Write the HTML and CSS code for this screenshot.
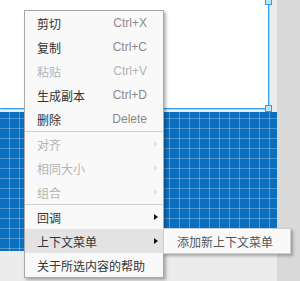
FILE: index.html
```html
<!DOCTYPE html>
<html lang="zh">
<head>
    <meta charset="UTF-8">
    <title>上下文菜单</title>
    <link rel="stylesheet" href="styles.css">
</head>
<body>
    <div class="stage">
        <div class="panel">
            <span class="handle handle-top"></span>
            <span class="handle handle-bottom"></span>
        </div>
        <div class="grid"></div>
    </div>
    <div class="side"></div>

    <ul class="menu">
        <li class="item"><span>剪切</span><span class="key">Ctrl+X</span></li>
        <li class="item"><span>复制</span><span class="key">Ctrl+C</span></li>
        <li class="item disabled"><span>粘贴</span><span class="key">Ctrl+V</span></li>
        <li class="item"><span>生成副本</span><span class="key">Ctrl+D</span></li>
        <li class="item"><span>删除</span><span class="key">Delete</span></li>
        <li class="sep"></li>
        <li class="item disabled sub"><span>对齐</span></li>
        <li class="item disabled sub"><span>相同大小</span></li>
        <li class="item disabled sub"><span>组合</span></li>
        <li class="sep"></li>
        <li class="item sub"><span>回调</span></li>
        <li class="item sub active"><span>上下文菜单</span></li>
        <li class="item"><span>关于所选内容的帮助</span></li>
    </ul>

    <ul class="submenu">
        <li class="item"><span>添加新上下文菜单</span></li>
    </ul>
</body>
</html>
```

FILE: styles.css
```css
body {
    margin: 0;
    width: 300px;
    height: 281px;
    overflow: hidden;
    display: flex;
    font-family: "Liberation Sans", "Noto Sans CJK SC", sans-serif;
    font-size: 12px;
}
.stage {
    width: 277px;
    background-color: #ececec;
    display: flex;
    flex-direction: column;
    gap: 3px;
}
.side {
    flex: 1;
    background-color: #dadada;
}
.panel {
    position: relative;
    width: 268px;
    height: 108px;
    background-color: #fff;
    border-right: 1px solid #2e9cf0;
    border-bottom: 1px solid #2e9cf0;
    box-shadow: 1px 1px 0 #a9dafc;
}
.handle {
    position: absolute;
    right: -4px;
    width: 5px;
    height: 5px;
    background-color: #bfe6ff;
    border: 1px solid #2e9cf0;
}
.handle-top {
    top: -2px;
}
.handle-bottom {
    bottom: -4px;
}
.grid {
    height: 139px;
    background-color: #0b6fc0;
    background-image:
        linear-gradient(to right, rgba(255, 255, 255, 0.28) 1px, transparent 1px),
        linear-gradient(to bottom, rgba(255, 255, 255, 0.28) 1px, transparent 1px);
    background-size: 10px 10px;
    background-position: 9px 6px;
}
.menu, .submenu {
    position: absolute;
    margin: 0;
    padding: 0;
    list-style: none;
    background-color: #f9f9f9;
    border: 1px solid #a8a8a8;
    box-shadow: 2px 2px 3px rgba(0, 0, 0, 0.3);
}
.menu {
    left: 24px;
    top: 10px;
    width: 138px;
}
.submenu {
    left: 163px;
    top: 228px;
    width: 126px;
    border-color: #d0d0d0;
}
.item {
    position: relative;
    height: 24px;
    padding: 0 16px 0 12px;
    display: flex;
    align-items: center;
    justify-content: space-between;
    color: #333;
}
.submenu .item {
    padding-left: 13px;
    color: #555;
}
.key {
    color: #8a8a8a;
}
.disabled, .disabled .key {
    color: #b4b4b4;
}
.active {
    background-color: #e3e3e3;
}
.sub::after {
    content: "";
    position: absolute;
    left: 129px;
    top: 9px;
    border-left: 4px solid #111;
    border-top: 3px solid transparent;
    border-bottom: 3px solid transparent;
}
.disabled.sub::after {
    border-left-color: #e6e6e6;
}
.sep {
    height: 1px;
    background-color: #cfcfcf;
}
```
